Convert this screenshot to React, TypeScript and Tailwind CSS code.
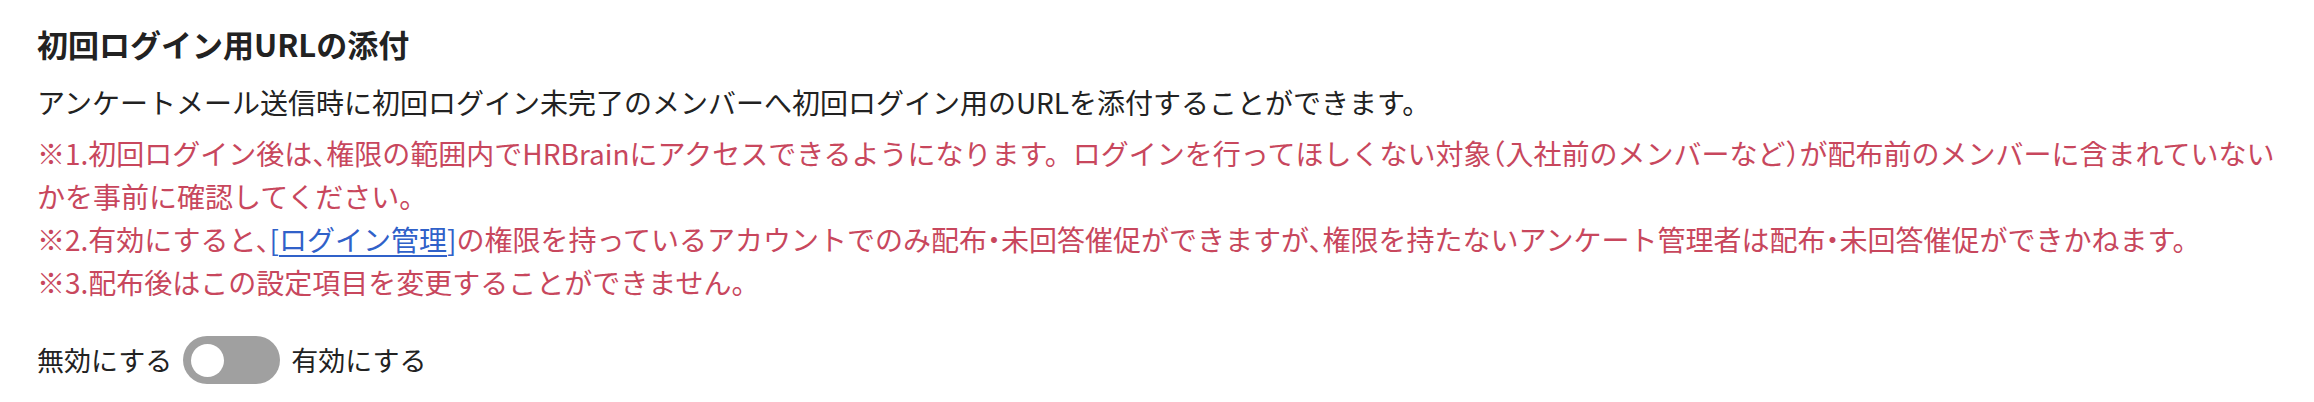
export default function App() {
  return (
    <main
      className="w-[2314px] h-[402px] bg-white pl-[37px] pr-[32px] pt-[24px] text-[#222] [font-feature-settings:'halt']"
      style={{ fontFamily: '"Noto Sans CJK JP", "Noto Sans", sans-serif' }}
    >
      <h2 className="text-[31px] font-bold leading-[40px]">初回ログイン用URLの添付</h2>
      <p className="mt-[18px] text-[28px] leading-[40px]">
        アンケートメール送信時に初回ログイン未完了のメンバーへ初回ログイン用のURLを添付することができます。
      </p>

      <div className="mt-[10px] text-[28px] leading-[43px] text-[#c8475d]">
        <p>
          {"※1.初回ログイン後は、権限の範囲内でHRBrainにアクセスできるようになります。\u2002ログインを行ってほしくない対象（入社前のメンバーなど）が配布前のメンバーに含まれていないかを事前に確認してください。"}
        </p>
        <p>
          ※2.有効にすると、
          <a href="#" className="text-[#3061c9]">
            [<span className="underline underline-offset-4">ログイン管理</span>]
          </a>
          の権限を持っているアカウントでのみ配布・未回答催促ができますが、権限を持たないアンケート管理者は配布・未回答催促ができかねます。
        </p>
        <p>※3.配布後はこの設定項目を変更することができません。</p>
      </div>

      <div className="mt-[32px] flex items-center gap-[11px] text-[27px]">
        <span>無効にする</span>
        <button
          type="button"
          className="flex h-[48px] w-[97px] items-center rounded-full bg-[#a0a0a0] pl-[8px]"
        >
          <span className="h-[33px] w-[33px] rounded-full bg-white" />
        </button>
        <span>有効にする</span>
      </div>
    </main>
  );
}
